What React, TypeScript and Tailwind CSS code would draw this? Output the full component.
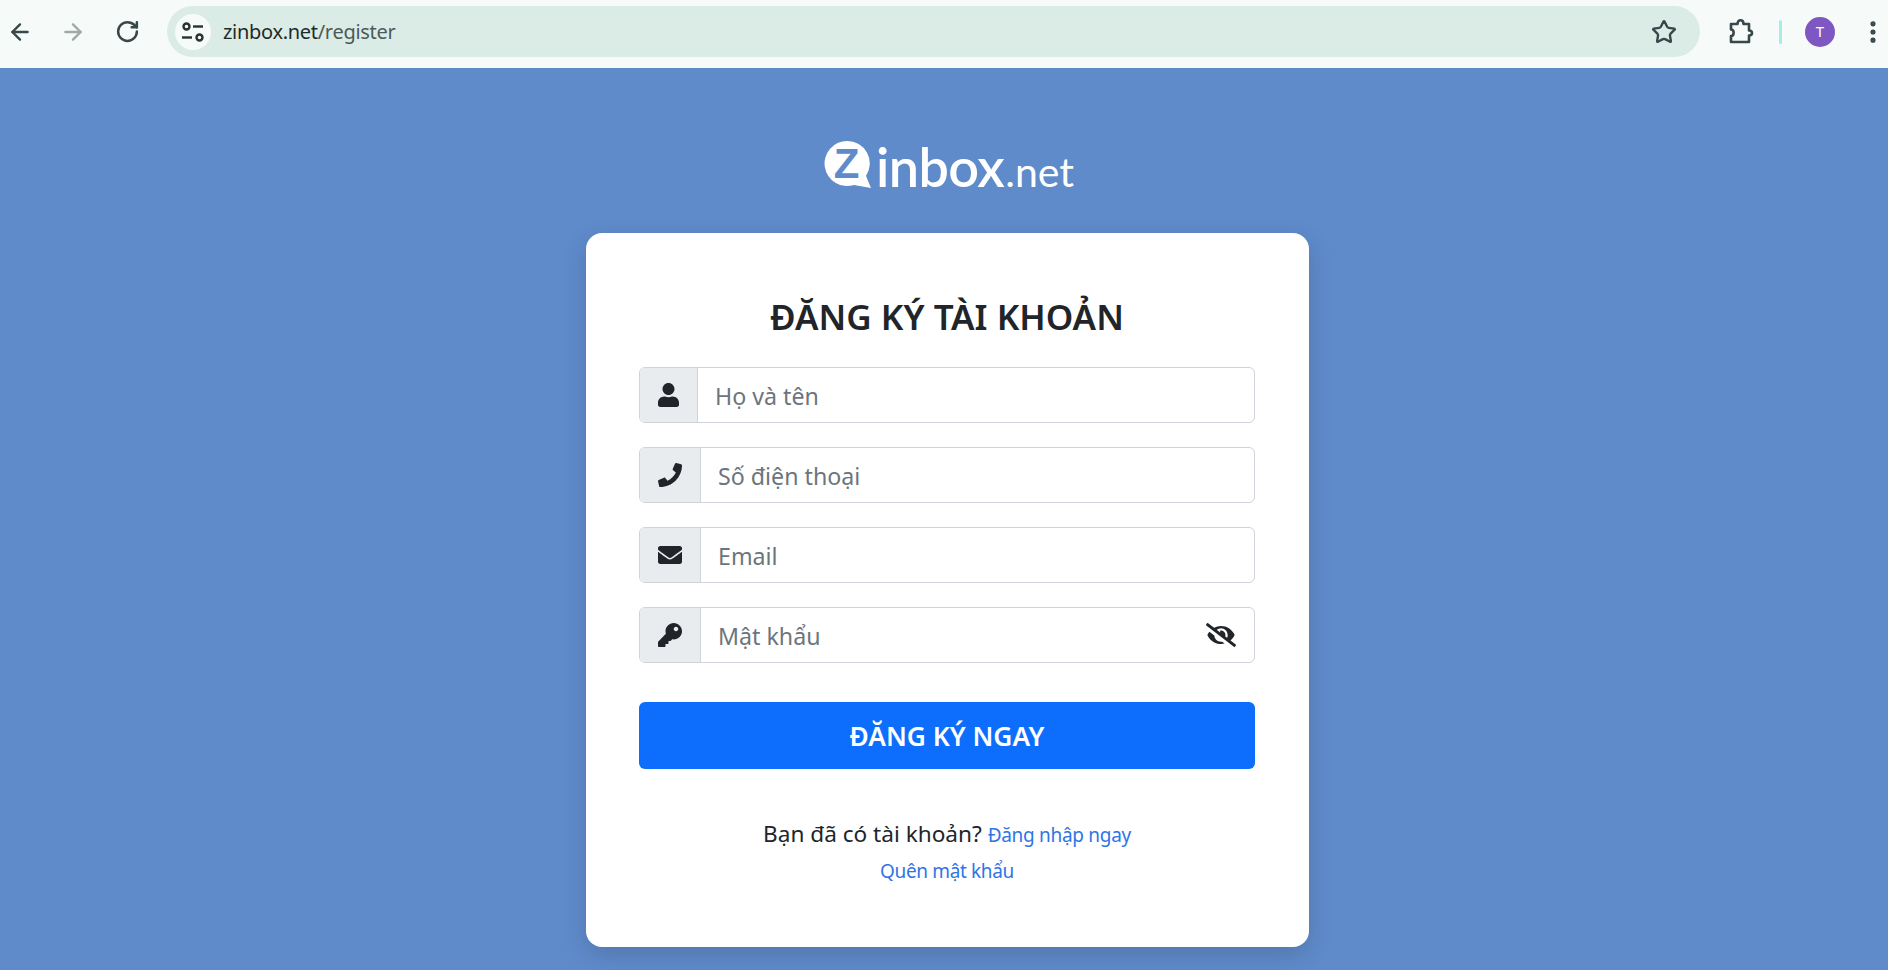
import React from 'react'
import { ArrowLeft, ArrowRight, RotateCw, Star, EllipsisVertical } from 'lucide-react'
import { FaUser, FaPhone, FaEnvelope, FaKey, FaEyeSlash } from 'react-icons/fa'

const font = 'font-["Noto_Sans","Open_Sans",sans-serif]'

function TuneIcon() {
  return (
    <svg viewBox="0 0 28 28" className="h-7 w-7" fill="none" stroke="#26332f" strokeWidth="2.4">
      <circle cx="7.5" cy="8.5" r="3" />
      <path d="M14 8.5h10" />
      <path d="M3 19.5h10" />
      <circle cx="20.5" cy="19.5" r="3" />
    </svg>
  )
}

function PuzzleIcon() {
  return (
    <svg viewBox="0 0 26 28" className="h-7 w-[26px]" fill="none" stroke="#37474a" strokeWidth="2.6" strokeLinejoin="round">
      <path d="M3 6h6.500c0-5 6-5 6 0H21v6.500c4 0 4 5 0 5V24H3v-6c3.500 0 3.500-6.500 0-6.500z" />
    </svg>
  )
}

function Logo() {
  return (
    <div className="flex h-[60px] items-center text-white">
      <svg viewBox="0 0 50 50" className="mt-[2px] h-[50px] w-[50px]">
        <path d="M24 1a22.500 22.500 0 1 0 7 43.900L48 48 43 36A22.500 22.500 0 0 0 24 1z" fill="#fff" />
        <text x="23.500" y="37.500" textAnchor="middle" fontFamily="Liberation Sans" fontWeight="700" fontSize="42" fill="#5f8bcb">Z</text>
      </svg>
      <span className='ml-[3px] mt-[6px] font-["Lato",sans-serif] text-[54px] leading-none font-semibold tracking-[-0.6px]'>inbox</span>
      <span className='ml-[1px] mt-[14px] font-["Lato",sans-serif] text-[41px] leading-none font-normal'>.net</span>
    </div>
  )
}

function Field({ icon, placeholder, addonWidth, children }: { icon: React.ReactNode; placeholder: string; addonWidth: string; children?: React.ReactNode }) {
  return (
    <div className="flex h-14 overflow-hidden rounded-[6px] border border-[#ced4da] bg-white">
      <div className={`flex shrink-0 items-center justify-center border-r border-[#ced4da] bg-[#e9ecef] text-[#212529] ${addonWidth}`}>{icon}</div>
      <input
        readOnly
        placeholder={placeholder}
        className="min-w-0 flex-1 px-[17px] pt-[2px] text-[23.2px] text-[#212529] outline-none placeholder:text-[#6c757d]"
      />
      {children}
    </div>
  )
}

export default function App() {
  return (
    <div className={`flex h-[970px] w-full flex-col overflow-hidden bg-[#5f8bcb] ${font}`}>
      <header className="flex h-[68px] shrink-0 items-center bg-[#f6fbf9] pb-[5px] pl-[7px]">
        <ArrowLeft className="h-[26px] w-[26px] text-[#37474a]" strokeWidth={2.2} />
        <ArrowRight className="ml-[27px] h-[26px] w-[26px] text-[#a0a8a8]" strokeWidth={2.2} />
        <RotateCw className="ml-[29px] h-[25px] w-[25px] text-[#37474a]" strokeWidth={2.4} />
        <div className="ml-[27px] flex h-[51px] w-[1533px] items-center rounded-full bg-[#dbece7] pl-2 pr-[23px]">
          <div className="flex h-9 w-9 items-center justify-center rounded-full bg-[#f6fbf9]">
            <TuneIcon />
          </div>
          <div className="ml-3 text-[20px] tracking-[-0.3px] text-[#1f2a28]">
            zinbox.net<span className="text-[#4b5a57]">/register</span>
          </div>
          <Star className="ml-auto h-[26px] w-[26px] text-[#37474a]" strokeWidth={2.2} />
        </div>
        <div className="ml-[28px]"><PuzzleIcon /></div>
        <div className="ml-[25px] h-6 w-[3px] rounded bg-[#a8ece4]" />
        <div className="ml-[23px] flex h-[30px] w-[30px] items-center justify-center rounded-full bg-[#7e57c2] text-[15px] text-white">T</div>
        <EllipsisVertical className="ml-[24px] h-[28px] w-[28px] text-[#37474a]" strokeWidth={2.4} />
      </header>

      <main className="flex flex-col items-center pl-[7px] pt-[66px]">
        <div className="flex h-[60px] w-[723px] justify-center pl-[2px]">
          <Logo />
        </div>
        <div className="mt-[39px] h-[714px] w-[723px] shrink-0 rounded-[16px] bg-white pl-[53px] pr-[54px] pt-[57px] shadow-[0_8px_24px_rgba(0,0,0,0.15)]">
          <h1 className="text-center text-[35px] leading-[54px] font-semibold text-[#212529]">ĐĂNG KÝ TÀI KHOẢN</h1>
          <form className="mt-[23px] flex flex-col gap-6">
            <Field icon={<FaUser className="h-[24px] w-[21px]" />} placeholder="Họ và tên" addonWidth="w-[58px]" />
            <Field icon={<FaPhone className="h-[24px] w-[24px]" />} placeholder="Số điện thoại" addonWidth="w-[61px]" />
            <Field icon={<FaEnvelope className="h-[24px] w-[24px]" />} placeholder="Email" addonWidth="w-[61px]" />
            <Field icon={<FaKey className="h-[24px] w-[24px]" />} placeholder="Mật khẩu" addonWidth="w-[61px]">
              <div className="flex items-center pr-[18px] text-[#212529]">
                <FaEyeSlash className="h-[24px] w-[30px]" />
              </div>
            </Field>
            <button type="button" className="mt-[15px] h-[67px] rounded-[6px] bg-[#0d6efd] pt-[2px] text-[26.300px] font-semibold text-white">ĐĂNG KÝ NGAY</button>
          </form>
          <div className="mt-[47px] text-center text-[22.600px] leading-[36px] text-[#212529]">
            Bạn đã có tài khoản? <a className="text-[19px] tracking-[-0.3px] text-[#2f75e6]">Đăng nhập ngay</a>
          </div>
          <div className="text-center text-[19px] leading-[36px] tracking-[-0.35px] text-[#2f75e6]">
            <a>Quên mật khẩu</a>
          </div>
        </div>
      </main>
    </div>
  )
}
